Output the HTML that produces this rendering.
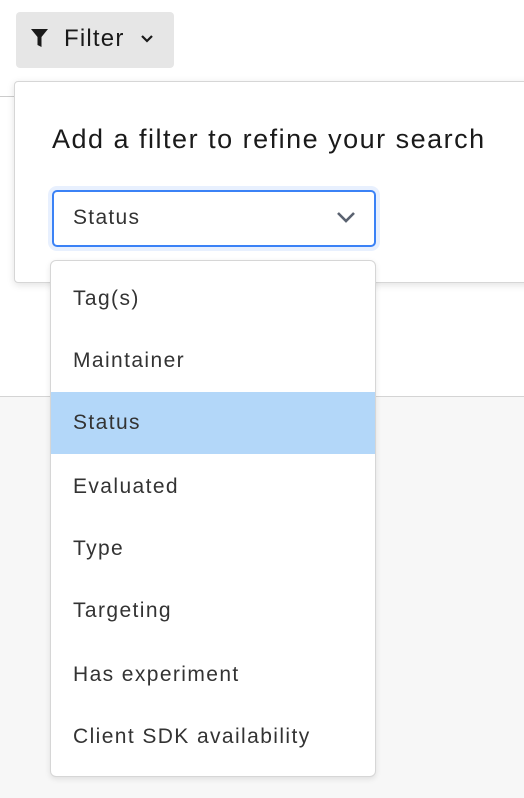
<!DOCTYPE html>
<html><head><style>
*{margin:0;padding:0;box-sizing:border-box}
body{width:524px;height:798px;overflow:hidden;background:#fff;font-family:"Liberation Sans",sans-serif;position:relative;color:#222}
.gray{position:absolute;left:0;top:396px;width:524px;height:402px;background:#f7f7f7;border-top:1px solid #d4d4d4}
.hl{position:absolute;left:0;top:96px;width:20px;border-top:1px solid #ccc}
.btn{position:absolute;left:16px;top:12px;width:158px;height:56px;background:#e6e6e6;border-radius:4px;font-size:24px;letter-spacing:1.2px;color:#1a1a1a}
.btn span{position:absolute;left:48px;top:13px}
.pop{position:absolute;left:14px;top:81px;width:530px;height:202px;background:#fff;border:1px solid #d6d6d6;border-radius:4px;box-shadow:0 2px 8px rgba(0,0,0,.12)}
.pop h1{position:absolute;left:37px;top:42px;font-weight:normal;font-size:27px;letter-spacing:1.5px;color:#1a1a1a;white-space:nowrap}
.sel{position:absolute;left:37px;top:108px;width:324px;height:57px;border:2px solid #3b82f6;border-radius:5px;box-shadow:0 0 0 4px #e8f0fe;font-size:21px;letter-spacing:1.3px;color:#333}
.sel span{position:absolute;left:19px;top:14px}
.behind{position:absolute;left:375px;top:262px;font-size:21px;letter-spacing:1.3px;color:#999}
.list{position:absolute;left:50px;top:260px;width:326px;height:517px;background:#fff;border:1px solid #d6d6d6;border-radius:6px;box-shadow:0 2px 6px rgba(0,0,0,.1);overflow:hidden}
.it{position:absolute;left:0;width:100%;height:62px;font-size:21px;letter-spacing:1.4px;color:#333;padding-left:22px;line-height:62px}
.it.on{background:#b3d7f9}
</style></head><body>
<div class="hl"></div>
<div class="gray"></div>
<div class="btn">
<svg style="position:absolute;left:14px;top:16px" width="19" height="20" viewBox="0 0 19 20"><path d="M1 1H18L11.5 9V19L7.5 17V9Z" fill="#1a1a1a"/></svg>
<span>Filter</span>
<svg style="position:absolute;left:124px;top:22px" width="14" height="10" viewBox="0 0 14 10"><path d="M2 2L7 7L12 2" stroke="#1a1a1a" stroke-width="2.2" fill="none"/></svg>
</div>
<div class="behind">ection</div>
<div class="pop">
<h1>Add a filter to refine your search</h1>
<div class="sel"><span>Status</span>
<svg style="position:absolute;left:282px;top:18px" width="20" height="14" viewBox="0 0 20 14"><path d="M2 3L10 11L18 3" stroke="#5a6270" stroke-width="2.6" fill="none"/></svg>
</div>
</div>
<div class="list">
<div class="it" style="top:7px">Tag(s)</div>
<div class="it" style="top:69px">Maintainer</div>
<div class="it on" style="top:131px">Status</div>
<div class="it" style="top:195px">Evaluated</div>
<div class="it" style="top:257px">Type</div>
<div class="it" style="top:319px">Targeting</div>
<div class="it" style="top:383px">Has experiment</div>
<div class="it" style="top:445px">Client SDK availability</div>
</div>
</body></html>
